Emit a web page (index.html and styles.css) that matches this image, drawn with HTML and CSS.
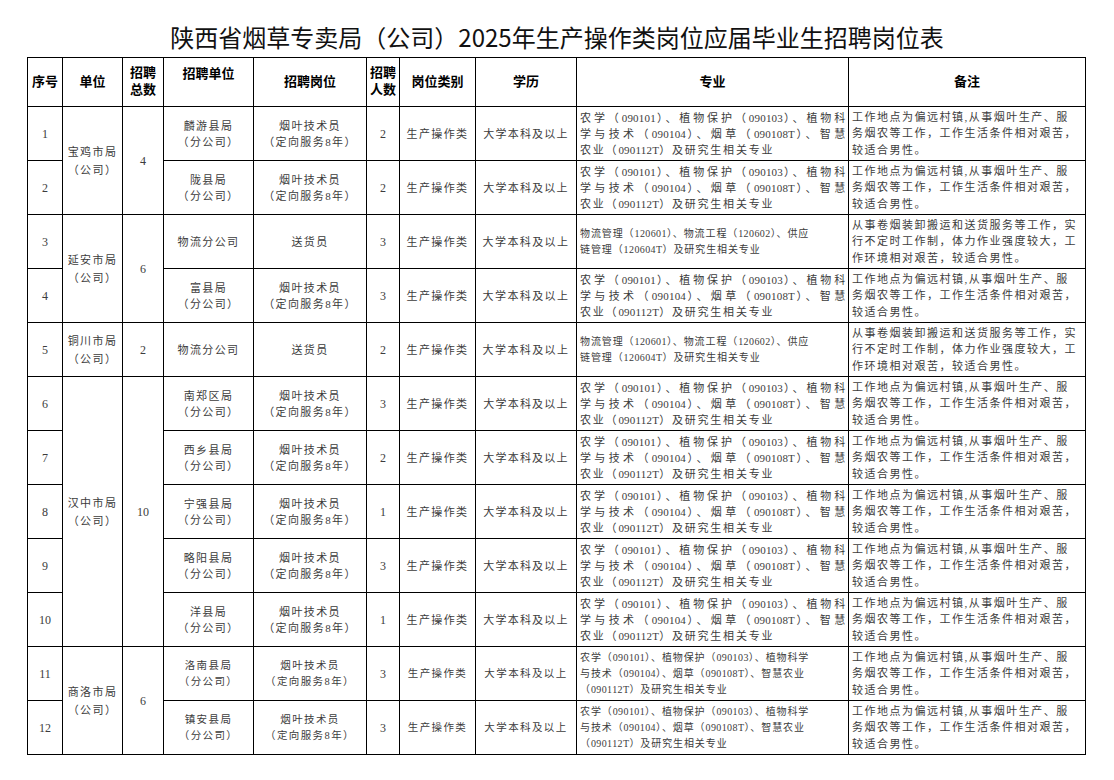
FILE: index.html
```html
<!DOCTYPE html>
<html lang="zh-CN">
<head>
<meta charset="utf-8">
<title>陕西省烟草专卖局（公司）2025年生产操作类岗位应届毕业生招聘岗位表</title>
<link rel="stylesheet" href="styles.css">
</head>
<body>
<div class="page">
  <h1 class="title">陕西省烟草专卖局（公司）2025年生产操作类岗位应届毕业生招聘岗位表</h1>
  <div class="sheet">
    <table class="grid">
      <colgroup>
        <col class="c-no"><col class="c-unit"><col class="c-total"><col class="c-branch"><col class="c-post">
        <col class="c-num"><col class="c-type"><col class="c-edu"><col class="c-major"><col class="c-note">
      </colgroup>
      <thead>
        <tr>
          <th>序号</th>
          <th>单位</th>
          <th>招聘<br>总数</th>
          <th class="th-top">招聘单位</th>
          <th>招聘岗位</th>
          <th>招聘<br>人数</th>
          <th>岗位类别</th>
          <th>学历</th>
          <th>专业</th>
          <th>备注</th>
        </tr>
      </thead>
      <tbody>
        <tr>
          <td class="d">1</td>
          <td class="unit" rowspan="2">宝鸡市局<br>（公司）</td>
          <td class="d" rowspan="2">4</td>
          <td class="t">麟游县局<br>（分公司）</td>
          <td class="t">烟叶技术员<br>（定向服务8年）</td>
          <td class="d">2</td>
          <td class="t">生产操作类</td>
          <td class="t edu">大学本科及以上</td>
          <td class="major"><span class="jl">农学（<span class="n">090101</span>）、植物保护（<span class="n">090103</span>）、植物科</span><span class="jl">学与技术（<span class="n">090104</span>）、烟草（<span class="n">090108T</span>）、智慧</span><span class="ln">农业（<span class="n">090112T</span>）及研究生相关专业</span></td>
          <td class="note">工作地点为偏远村镇,从事烟叶生产、服<br>务烟农等工作，工作生活条件相对艰苦，<br>较适合男性。</td>
        </tr>
        <tr>
          <td class="d">2</td>
          <td class="t">陇县局<br>（分公司）</td>
          <td class="t">烟叶技术员<br>（定向服务8年）</td>
          <td class="d">2</td>
          <td class="t">生产操作类</td>
          <td class="t edu">大学本科及以上</td>
          <td class="major"><span class="jl">农学（<span class="n">090101</span>）、植物保护（<span class="n">090103</span>）、植物科</span><span class="jl">学与技术（<span class="n">090104</span>）、烟草（<span class="n">090108T</span>）、智慧</span><span class="ln">农业（<span class="n">090112T</span>）及研究生相关专业</span></td>
          <td class="note">工作地点为偏远村镇,从事烟叶生产、服<br>务烟农等工作，工作生活条件相对艰苦，<br>较适合男性。</td>
        </tr>
        <tr>
          <td class="d">3</td>
          <td class="unit" rowspan="2">延安市局<br>（公司）</td>
          <td class="d" rowspan="2">6</td>
          <td class="t">物流分公司</td>
          <td class="t">送货员</td>
          <td class="d">3</td>
          <td class="t">生产操作类</td>
          <td class="t">大学本科及以上</td>
          <td class="major small"><span class="ln">物流管理（<span class="n">120601</span>）、物流工程（<span class="n">120602</span>）、供应</span><span class="ln">链管理（<span class="n">120604T</span>）及研究生相关专业</span></td>
          <td class="note">从事卷烟装卸搬运和送货服务等工作，实<br>行不定时工作制，体力作业强度较大，工<br>作环境相对艰苦，较适合男性。</td>
        </tr>
        <tr>
          <td class="d">4</td>
          <td class="t">富县局<br>（分公司）</td>
          <td class="t">烟叶技术员<br>（定向服务8年）</td>
          <td class="d">3</td>
          <td class="t">生产操作类</td>
          <td class="t">大学本科及以上</td>
          <td class="major"><span class="jl">农学（<span class="n">090101</span>）、植物保护（<span class="n">090103</span>）、植物科</span><span class="jl">学与技术（<span class="n">090104</span>）、烟草（<span class="n">090108T</span>）、智慧</span><span class="ln">农业（<span class="n">090112T</span>）及研究生相关专业</span></td>
          <td class="note">工作地点为偏远村镇,从事烟叶生产、服<br>务烟农等工作，工作生活条件相对艰苦，<br>较适合男性。</td>
        </tr>
        <tr>
          <td class="d">5</td>
          <td class="unit">铜川市局<br>（公司）</td>
          <td class="d">2</td>
          <td class="t">物流分公司</td>
          <td class="t">送货员</td>
          <td class="d">2</td>
          <td class="t">生产操作类</td>
          <td class="t">大学本科及以上</td>
          <td class="major small"><span class="ln">物流管理（<span class="n">120601</span>）、物流工程（<span class="n">120602</span>）、供应</span><span class="ln">链管理（<span class="n">120604T</span>）及研究生相关专业</span></td>
          <td class="note">从事卷烟装卸搬运和送货服务等工作，实<br>行不定时工作制，体力作业强度较大，工<br>作环境相对艰苦，较适合男性。</td>
        </tr>
        <tr>
          <td class="d">6</td>
          <td class="unit" rowspan="5">汉中市局<br>（公司）</td>
          <td class="d" rowspan="5">10</td>
          <td class="t">南郑区局<br>（分公司）</td>
          <td class="t">烟叶技术员<br>（定向服务8年）</td>
          <td class="d">3</td>
          <td class="t">生产操作类</td>
          <td class="t edu">大学本科及以上</td>
          <td class="major"><span class="jl">农学（<span class="n">090101</span>）、植物保护（<span class="n">090103</span>）、植物科</span><span class="jl">学与技术（<span class="n">090104</span>）、烟草（<span class="n">090108T</span>）、智慧</span><span class="ln">农业（<span class="n">090112T</span>）及研究生相关专业</span></td>
          <td class="note">工作地点为偏远村镇,从事烟叶生产、服<br>务烟农等工作，工作生活条件相对艰苦，<br>较适合男性。</td>
        </tr>
        <tr>
          <td class="d">7</td>
          <td class="t">西乡县局<br>（分公司）</td>
          <td class="t">烟叶技术员<br>（定向服务8年）</td>
          <td class="d">2</td>
          <td class="t">生产操作类</td>
          <td class="t edu">大学本科及以上</td>
          <td class="major"><span class="jl">农学（<span class="n">090101</span>）、植物保护（<span class="n">090103</span>）、植物科</span><span class="jl">学与技术（<span class="n">090104</span>）、烟草（<span class="n">090108T</span>）、智慧</span><span class="ln">农业（<span class="n">090112T</span>）及研究生相关专业</span></td>
          <td class="note">工作地点为偏远村镇,从事烟叶生产、服<br>务烟农等工作，工作生活条件相对艰苦，<br>较适合男性。</td>
        </tr>
        <tr>
          <td class="d">8</td>
          <td class="t">宁强县局<br>（分公司）</td>
          <td class="t">烟叶技术员<br>（定向服务8年）</td>
          <td class="d">1</td>
          <td class="t">生产操作类</td>
          <td class="t edu">大学本科及以上</td>
          <td class="major"><span class="jl">农学（<span class="n">090101</span>）、植物保护（<span class="n">090103</span>）、植物科</span><span class="jl">学与技术（<span class="n">090104</span>）、烟草（<span class="n">090108T</span>）、智慧</span><span class="ln">农业（<span class="n">090112T</span>）及研究生相关专业</span></td>
          <td class="note">工作地点为偏远村镇,从事烟叶生产、服<br>务烟农等工作，工作生活条件相对艰苦，<br>较适合男性。</td>
        </tr>
        <tr>
          <td class="d">9</td>
          <td class="t">略阳县局<br>（分公司）</td>
          <td class="t">烟叶技术员<br>（定向服务8年）</td>
          <td class="d">3</td>
          <td class="t">生产操作类</td>
          <td class="t edu">大学本科及以上</td>
          <td class="major"><span class="jl">农学（<span class="n">090101</span>）、植物保护（<span class="n">090103</span>）、植物科</span><span class="jl">学与技术（<span class="n">090104</span>）、烟草（<span class="n">090108T</span>）、智慧</span><span class="ln">农业（<span class="n">090112T</span>）及研究生相关专业</span></td>
          <td class="note">工作地点为偏远村镇,从事烟叶生产、服<br>务烟农等工作，工作生活条件相对艰苦，<br>较适合男性。</td>
        </tr>
        <tr>
          <td class="d">10</td>
          <td class="t">洋县局<br>（分公司）</td>
          <td class="t">烟叶技术员<br>（定向服务8年）</td>
          <td class="d">1</td>
          <td class="t">生产操作类</td>
          <td class="t edu">大学本科及以上</td>
          <td class="major"><span class="jl">农学（<span class="n">090101</span>）、植物保护（<span class="n">090103</span>）、植物科</span><span class="jl">学与技术（<span class="n">090104</span>）、烟草（<span class="n">090108T</span>）、智慧</span><span class="ln">农业（<span class="n">090112T</span>）及研究生相关专业</span></td>
          <td class="note">工作地点为偏远村镇,从事烟叶生产、服<br>务烟农等工作，工作生活条件相对艰苦，<br>较适合男性。</td>
        </tr>
        <tr>
          <td class="d">11</td>
          <td class="unit" rowspan="2">商洛市局<br>（公司）</td>
          <td class="d" rowspan="2">6</td>
          <td class="t sm">洛南县局<br>（分公司）</td>
          <td class="t sm">烟叶技术员<br>（定向服务8年）</td>
          <td class="d">3</td>
          <td class="t sm">生产操作类</td>
          <td class="t sm">大学本科及以上</td>
          <td class="major small"><span class="ln">农学（<span class="n">090101</span>）、植物保护（<span class="n">090103</span>）、植物科学</span><span class="ln">与技术（<span class="n">090104</span>）、烟草（<span class="n">090108T</span>）、智慧农业</span><span class="ln">（<span class="n">090112T</span>）及研究生相关专业</span></td>
          <td class="note">工作地点为偏远村镇,从事烟叶生产、服<br>务烟农等工作，工作生活条件相对艰苦，<br>较适合男性。</td>
        </tr>
        <tr>
          <td class="d">12</td>
          <td class="t sm">镇安县局<br>（分公司）</td>
          <td class="t sm">烟叶技术员<br>（定向服务8年）</td>
          <td class="d">3</td>
          <td class="t sm">生产操作类</td>
          <td class="t sm">大学本科及以上</td>
          <td class="major small"><span class="ln">农学（<span class="n">090101</span>）、植物保护（<span class="n">090103</span>）、植物科学</span><span class="ln">与技术（<span class="n">090104</span>）、烟草（<span class="n">090108T</span>）、智慧农业</span><span class="ln">（<span class="n">090112T</span>）及研究生相关专业</span></td>
          <td class="note">工作地点为偏远村镇,从事烟叶生产、服<br>务烟农等工作，工作生活条件相对艰苦，<br>较适合男性。</td>
        </tr>
      </tbody>
    </table>
  </div>
</div>
</body>
</html>
```

FILE: styles.css
```css
html, body {
  margin: 0;
  padding: 0;
  background: #ffffff;
}

body {
  font-family: "Liberation Serif", "Noto Sans CJK SC", serif;
  color: #3c3c3c;
}

.page {
  width: 1114px;
  padding-top: 23px;
}

.title {
  margin: 0 0 6px;
  text-align: center;
  font-family: "Noto Sans CJK SC", sans-serif;
  font-weight: 400;
  font-size: 24px;
  line-height: 28px;
  color: #111111;
}

.sheet {
  padding-left: 27px;
}

.grid {
  border-collapse: collapse;
  table-layout: fixed;
  width: 1058px;
}

.c-no { width: 35px; }
.c-unit { width: 60px; }
.c-total { width: 41px; }
.c-branch { width: 90px; }
.c-post { width: 113px; }
.c-num { width: 33px; }
.c-type { width: 76px; }
.c-edu { width: 101px; }
.c-major { width: 272px; }
.c-note { width: 237px; }

.grid th,
.grid td {
  border: 1px solid #000000;
  padding: 0 2px;
  vertical-align: middle;
  text-align: center;
}

.grid thead tr {
  height: 49px;
}

.grid tbody tr {
  height: 54px;
}

.grid th {
  font-family: "Noto Sans CJK SC", sans-serif;
  font-weight: 700;
  font-size: 13px;
  line-height: 17px;
  color: #000000;
  padding-bottom: 4px;
}

.grid th.th-top {
  vertical-align: top;
  padding-top: 6px;
}

.grid td.d {
  font-size: 12px;
  line-height: 16px;
}

.grid td.t {
  font-size: 11px;
  line-height: 16px;
  letter-spacing: 1.4px;
  white-space: nowrap;
}

.grid td.t.edu {
  letter-spacing: 1.2px;
}

.grid td.t.sm {
  font-size: 10.5px;
}

.grid td.unit {
  font-size: 11px;
  line-height: 18px;
  letter-spacing: 1.4px;
  white-space: nowrap;
}

.grid td.major {
  text-align: left;
  font-size: 11px;
  line-height: 16px;
  letter-spacing: 1.8px;
  padding: 0 1px 0 3px;
  white-space: nowrap;
}

.grid td.major.small {
  font-size: 10px;
  letter-spacing: 0.9px;
}

.major .n {
  letter-spacing: 0.2px;
}

.major.small .n {
  letter-spacing: 0.4px;
}

.jl {
  display: block;
  text-align: justify;
  text-align-last: justify;
}

.ln {
  display: block;
  text-align: left;
}

.grid td.note {
  text-align: left;
  font-size: 11px;
  line-height: 16.5px;
  letter-spacing: 1.5px;
  padding: 0 2px 0 3px;
  white-space: nowrap;
}
```
